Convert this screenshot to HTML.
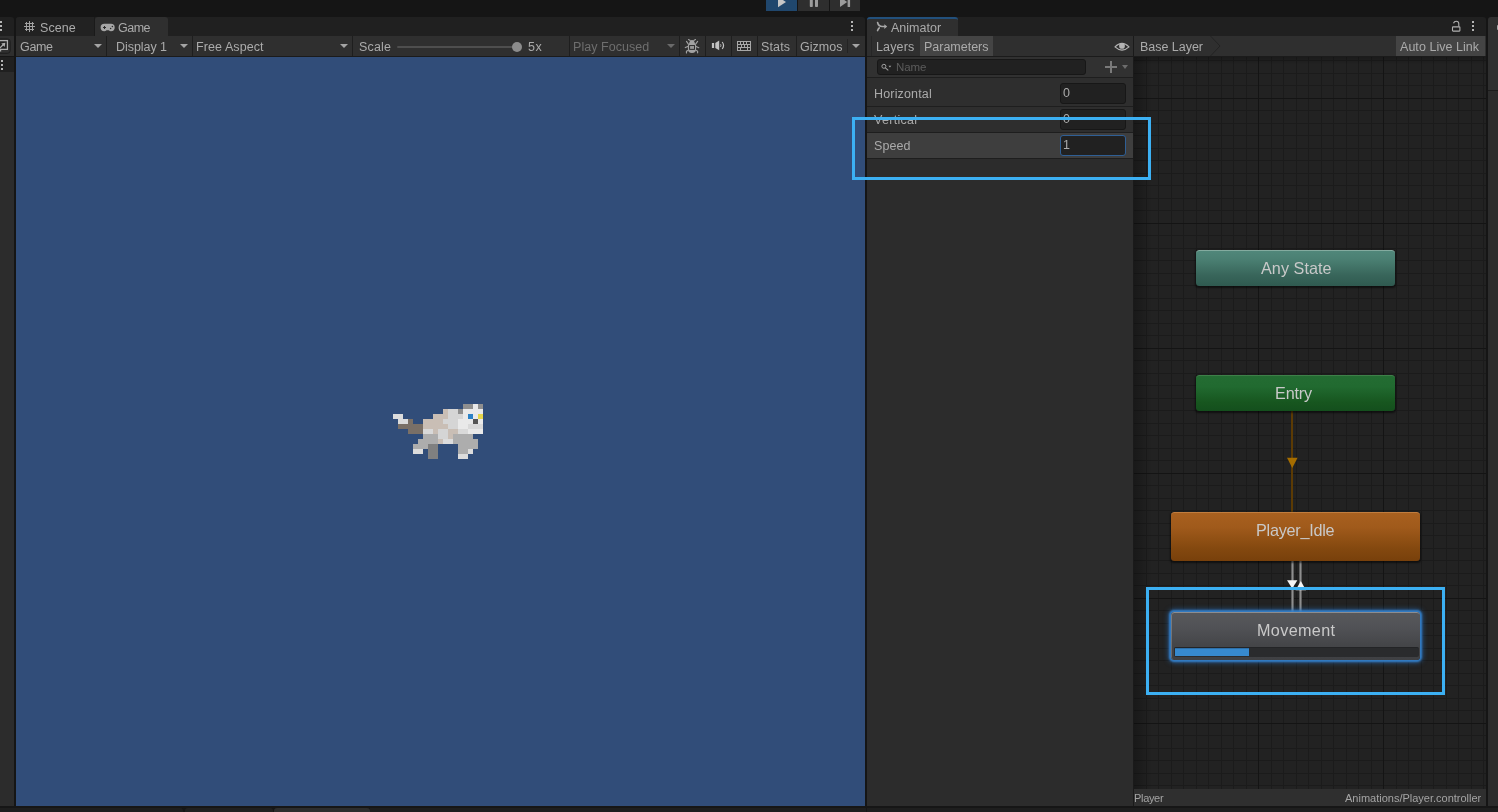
<!DOCTYPE html>
<html><head><meta charset="utf-8"><title>Unity</title>
<style>
*{box-sizing:border-box;margin:0;padding:0}
html,body{width:1498px;height:812px;overflow:hidden;background:#151515;font-family:"Liberation Sans",sans-serif}
#root{position:relative;width:1498px;height:812px;overflow:hidden;background:#151515}
.a{position:absolute}
.t{position:absolute;white-space:nowrap;line-height:16px;height:16px;will-change:transform}
.sep{position:absolute;top:36px;width:1px;height:20px;background:#1e1e1e}
.dd{position:absolute;width:0;height:0;border-left:4px solid transparent;border-right:4px solid transparent;border-top:4.5px solid #a4a4a4}
.dot{position:absolute;width:2px;height:2px;background:#b4b4b4}
.node{position:absolute;border-radius:3.5px;box-shadow:0 1px 2px 0.5px rgba(0,0,0,.55)}
svg{position:absolute;overflow:visible}
</style></head><body><div id="root">
<!-- ===== main toolbar play buttons ===== -->
<div class="a" style="left:766px;top:0;width:31px;height:11px;background:#20476d"></div>
<div class="a" style="left:798px;top:0;width:31px;height:11px;background:#2e2e2e"></div>
<div class="a" style="left:830px;top:0;width:30px;height:11px;background:#2e2e2e"></div>
<svg style="left:766px;top:0;overflow:hidden" width="94" height="11"><path d="M12 -3.2 L20 2 L12 7.2 Z" fill="#c6c6c6"/><rect x="43.8" y="-3" width="3" height="10" rx="0.8" fill="#9c9c9c"/><rect x="49" y="-3" width="3" height="10" rx="0.8" fill="#9c9c9c"/><path d="M74 -3 L81.2 2 L74 7 Z" fill="#9c9c9c"/><rect x="81.6" y="-3" width="2.5" height="10" rx="0.6" fill="#9c9c9c"/></svg>

<!-- ===== left strip ===== -->
<div class="a" style="left:0;top:17px;width:14px;height:19px;background:#202020;border-top-right-radius:3px"></div>
<div class="a" style="left:0;top:36px;width:14px;height:20px;background:#2f2f2f"></div>
<div class="a" style="left:0;top:57px;width:14px;height:15px;background:#202020"></div>
<div class="a" style="left:0;top:72px;width:14px;height:734px;background:#2c2c2c"></div>
<div class="a" style="left:0;top:21px;width:2px;height:2px;background:#b4b4b4"></div>
<div class="a" style="left:0;top:25px;width:2px;height:2px;background:#b4b4b4"></div>
<div class="a" style="left:0;top:29px;width:2px;height:2px;background:#b4b4b4"></div>
<div class="dot" style="left:1px;top:60px"></div><div class="dot" style="left:1px;top:64px"></div><div class="dot" style="left:1px;top:68px"></div>
<svg style="left:0;top:38px" width="12" height="16"><rect x="-3" y="0.9" width="13.2" height="14.4" rx="2.6" fill="none" stroke="#1d1d1d" stroke-width="1"/><rect x="-1" y="3.2" width="7.8" height="7.6" fill="#202020"/><path d="M0 2.6 H7.4 V11.4 H0.6 V13.6" fill="none" stroke="#adadad" stroke-width="1.2"/><path d="M-0.4 10.2 L3.9 6" fill="none" stroke="#adadad" stroke-width="1.2"/><path d="M5.3 4.8 L1.3 5.4 L4.7 8.9 Z" fill="#adadad"/></svg>

<!-- ===== game panel ===== -->
<div class="a" style="left:16px;top:17px;width:849px;height:19px;background:#202020;border-radius:3px 3px 0 0"></div>
<div class="a" style="left:16px;top:17px;width:79px;height:19px;background:#222222;border-radius:3px 0 0 0;border-right:1px solid #1a1a1a"></div>
<div class="a" style="left:95px;top:17px;width:73px;height:20px;background:#2f2f2f;border-radius:3px 3px 0 0"></div>
<div class="a" style="left:16px;top:36px;width:849px;height:20px;background:#2f2f2f"></div>
<div class="a" style="left:16px;top:56px;width:849px;height:1px;background:#1b1b1b"></div>
<div class="a" style="left:16px;top:57px;width:849px;height:749px;background:#314d79"></div>
<!-- scene icon -->
<svg style="left:24px;top:21px" width="11" height="11" shape-rendering="crispEdges"><g fill="#a2a2a2"><rect x="5" y="0" width="1" height="11"/><rect x="2" y="1" width="1" height="9"/><rect x="8" y="1" width="1" height="9"/><rect x="0" y="5" width="11" height="1"/><rect x="1" y="2" width="9" height="1"/><rect x="1" y="8" width="9" height="1"/></g></svg>
<!-- gamepad icon -->
<svg style="left:100px;top:23px" width="16" height="9"><path d="M4.3 0.8 H11 A3.7 3.7 0 0 1 11 8.2 Q9.6 8.2 8.8 7.2 H6.5 Q5.7 8.2 4.3 8.2 A3.7 3.7 0 0 1 4.3 0.8 Z" fill="#a6a6a6"/><path d="M4.5 3 V6 M3 4.5 H6" stroke="#2a2a2a" stroke-width="1"/><circle cx="12.4" cy="3.4" r="0.75" fill="#2a2a2a"/><circle cx="10.6" cy="5.5" r="0.75" fill="#2a2a2a"/></svg>
<!-- toolbar separators & arrows -->
<div class="sep" style="left:106px"></div><div class="sep" style="left:192px"></div><div class="sep" style="left:352px"></div>
<div class="sep" style="left:569px"></div><div class="sep" style="left:679px"></div><div class="sep" style="left:705px"></div><div class="sep" style="left:731px"></div><div class="sep" style="left:757px"></div><div class="sep" style="left:796px"></div>
<div class="a" style="left:847px;top:39px;width:1px;height:14px;background:#232323"></div>
<div class="dd" style="left:94px;top:44.2px"></div>
<div class="dd" style="left:180px;top:44.2px"></div>
<div class="dd" style="left:340px;top:44.2px"></div>
<div class="dd" style="left:667px;top:44.2px;border-top-color:#6a6a6a"></div>
<div class="dd" style="left:852px;top:44.2px"></div>
<!-- scale slider -->
<div class="a" style="left:397px;top:46px;width:120px;height:1.6px;background:#4e4e4e;border-radius:1px"></div>
<div class="a" style="left:512px;top:42px;width:10px;height:10px;border-radius:5px;background:#8c8c8c"></div>
<!-- kebab -->
<div class="dot" style="left:851px;top:21px"></div><div class="dot" style="left:851px;top:25px"></div><div class="dot" style="left:851px;top:29px"></div>
<!-- bug icon -->
<svg style="left:684px;top:38px" width="16" height="16"><g stroke="#a2a2a2" stroke-width="1.15" fill="none" stroke-linecap="round" stroke-linejoin="round"><path d="M6.2 2.5 L4.5 1.6 M9.8 2.5 L11.5 1.6"/><path d="M4.2 5.9 L2.5 3.4 M11.8 5.9 L13.6 3.4"/><path d="M3.9 8.4 L1.3 9.6 M12.1 8.4 L14.8 9.7"/><path d="M3.8 12.4 L2.45 13.3 V14.9 M12.3 12.4 L13.6 13.3 V14.8"/></g><path d="M5.1 5.4 Q5.6 1.9 8 1.9 Q10.4 1.9 10.9 5.4 Q12.1 5.8 12.1 7.5 V11 Q12.1 15 8 15 Q3.9 15 3.9 11 V7.5 Q3.9 5.8 5.1 5.4 Z" fill="#a2a2a2"/><rect x="5.6" y="7.55" width="4.9" height="3.8" fill="#969696" stroke="#2a2a2a" stroke-width="0.95"/></svg>
<!-- speaker -->
<svg style="left:711px;top:40px" width="14" height="11"><rect x="0.9" y="3" width="2.2" height="5" fill="#c2c2c2"/><path d="M4.3 3 L8.2 0.6 V10.3 L4.3 8 Z" fill="#c2c2c2"/><path d="M9.6 4.3 Q10.2 5.5 9.6 6.8" stroke="#c2c2c2" stroke-width="1" fill="none"/><path d="M11.2 2 Q13.9 5.5 11.2 9" stroke="#c2c2c2" stroke-width="1.2" fill="none"/></svg>
<!-- keyboard -->
<svg style="left:737px;top:41px" width="15" height="10" shape-rendering="crispEdges"><rect x="0" y="0" width="14" height="10" fill="#a8a8a8"/><g fill="#2c2c2c"><rect x="1" y="1" width="2" height="2"/><rect x="4" y="1" width="2" height="2"/><rect x="7" y="1" width="2" height="2"/><rect x="10" y="1" width="3" height="2"/><rect x="1" y="4" width="3" height="2"/><rect x="5" y="4" width="2" height="2"/><rect x="8" y="4" width="2" height="2"/><rect x="11" y="4" width="2" height="2"/><rect x="1" y="7" width="2" height="2"/><rect x="4" y="7" width="6" height="2"/><rect x="11" y="7" width="2" height="2"/></g></svg>

<!-- ===== animator panel ===== -->
<div class="a" style="left:867px;top:17px;width:619px;height:19px;background:#202020;border-radius:3px 3px 0 0"></div>
<div class="a" style="left:867px;top:17px;width:91px;height:20px;background:#2f2f2f;border-top:2px solid #22507c;border-radius:3px 3px 0 0"></div>
<div class="a" style="left:867px;top:36px;width:619px;height:20px;background:#2f2f2f"></div>
<div class="a" style="left:867px;top:56px;width:619px;height:1px;background:#1b1b1b"></div>
<div class="a" style="left:867px;top:57px;width:266px;height:749px;background:#2c2c2c"></div>
<div class="a" style="left:871px;top:36px;width:1px;height:20px;background:#262626"></div>
<div class="a" style="left:920px;top:36px;width:73px;height:20px;background:#444444"></div>
<div class="a" style="left:1133px;top:36px;width:1px;height:770px;background:#1a1a1a"></div>
<div class="a" style="left:1396px;top:36px;width:89px;height:20px;background:#444444"></div>
<!-- animator tab icon -->
<svg style="left:876px;top:21px" width="12" height="11"><g fill="none" stroke="#a9a9a9" stroke-width="1.6" stroke-linecap="round"><path d="M1.6 1.5 Q2.4 5.5 6.4 5.5 H8.6"/><path d="M3.3 6.9 Q2.2 7.8 1.6 9.6"/></g><path d="M8.3 3.3 L11.2 5.5 L8.3 7.9 Z" fill="#a9a9a9"/></svg>
<!-- eye -->
<svg style="left:1114px;top:42px" width="16" height="10"><path d="M1 4.9 Q8 -2.2 15 4.9 Q8 11.4 1 4.9 Z" fill="none" stroke="#b4b4b4" stroke-width="1.1"/><circle cx="8" cy="3.9" r="2.9" fill="#b4b4b4"/></svg>
<!-- breadcrumb chevron -->
<svg style="left:1208px;top:36px" width="14" height="20"><path d="M2.5 0 L12 10 L2.5 20" fill="none" stroke="#232323" stroke-width="1"/></svg>
<!-- lock -->
<svg style="left:1451px;top:19.6px" width="11" height="12"><rect x="1.5" y="6.9" width="7.4" height="4.2" rx="0.6" fill="none" stroke="#b0b0b0" stroke-width="1.1"/><path d="M2.5 3.2 Q3.2 1.2 5.2 1.2 Q7.8 1.2 7.8 3.8 V6.6" fill="none" stroke="#b0b0b0" stroke-width="1.1"/></svg>
<div class="dot" style="left:1472px;top:21px"></div><div class="dot" style="left:1472px;top:25px"></div><div class="dot" style="left:1472px;top:29px"></div>

<!-- parameters panel -->
<div class="a" style="left:867px;top:57px;width:266px;height:20px;background:#313131"></div>
<div class="a" style="left:867px;top:77px;width:266px;height:1px;background:#1e1e1e"></div>
<div class="a" style="left:877px;top:59px;width:209px;height:16px;background:#212121;border:1px solid #171717;border-radius:3px"></div>
<svg style="left:880px;top:62px" width="14" height="10"><circle cx="3.9" cy="4.3" r="2" fill="none" stroke="#a0a0a0" stroke-width="1"/><path d="M5.4 5.8 L8.3 8.4" stroke="#a0a0a0" stroke-width="1.1"/><path d="M8.5 3.7 H11.3 L9.9 5.4 Z" fill="#a0a0a0"/></svg>
<div class="a" style="left:1110px;top:61px;width:2px;height:12px;background:#7a7a7a"></div>
<div class="a" style="left:1105px;top:66px;width:12px;height:2px;background:#7a7a7a"></div>
<div class="dd" style="left:1121.5px;top:65px;border-top-color:#6c6c6c;border-left-width:3.6px;border-right-width:3.6px;border-top-width:4.2px"></div>
<!-- rows -->
<div class="a" style="left:867px;top:78px;width:266px;height:54px;background:#2e2e2e"></div>
<div class="a" style="left:867px;top:106px;width:266px;height:1px;background:#1e1e1e"></div>
<div class="a" style="left:867px;top:132px;width:266px;height:1px;background:#1e1e1e"></div>
<div class="a" style="left:867px;top:133px;width:266px;height:25px;background:#3e3e3e"></div>
<div class="a" style="left:867px;top:158px;width:266px;height:1px;background:#1e1e1e"></div>
<div class="a" style="left:1060px;top:83px;width:66px;height:21px;background:#212121;border:1px solid #171717;border-radius:3px"></div>
<div class="a" style="left:1060px;top:109px;width:66px;height:21px;background:#212121;border:1px solid #171717;border-radius:3px"></div>
<div class="a" style="left:1060px;top:135px;width:66px;height:21px;background:#212121;border:1px solid #2f5f95;border-radius:3px"></div>

<!-- graph -->
<div class="a" id="grid" style="left:1134px;top:57px;width:352px;height:732px;background:#222222;overflow:hidden">
<svg style="left:0;top:0" width="352" height="732" shape-rendering="crispEdges"><path d="M12 0h1v732h-1zM24 0h1v732h-1zM37 0h1v732h-1zM49 0h1v732h-1zM62 0h1v732h-1zM74 0h1v732h-1zM87 0h1v732h-1zM99 0h1v732h-1zM112 0h1v732h-1zM137 0h1v732h-1zM149 0h1v732h-1zM162 0h1v732h-1zM174 0h1v732h-1zM187 0h1v732h-1zM199 0h1v732h-1zM212 0h1v732h-1zM224 0h1v732h-1zM237 0h1v732h-1zM262 0h1v732h-1zM274 0h1v732h-1zM287 0h1v732h-1zM299 0h1v732h-1zM312 0h1v732h-1zM324 0h1v732h-1zM337 0h1v732h-1zM349 0h1v732h-1zM0 3h352v1h-352zM0 16h352v1h-352zM0 28h352v1h-352zM0 53h352v1h-352zM0 66h352v1h-352zM0 78h352v1h-352zM0 91h352v1h-352zM0 103h352v1h-352zM0 116h352v1h-352zM0 128h352v1h-352zM0 141h352v1h-352zM0 153h352v1h-352zM0 178h352v1h-352zM0 191h352v1h-352zM0 203h352v1h-352zM0 216h352v1h-352zM0 228h352v1h-352zM0 241h352v1h-352zM0 253h352v1h-352zM0 266h352v1h-352zM0 278h352v1h-352zM0 303h352v1h-352zM0 316h352v1h-352zM0 328h352v1h-352zM0 341h352v1h-352zM0 353h352v1h-352zM0 366h352v1h-352zM0 378h352v1h-352zM0 391h352v1h-352zM0 403h352v1h-352zM0 428h352v1h-352zM0 441h352v1h-352zM0 453h352v1h-352zM0 466h352v1h-352zM0 478h352v1h-352zM0 491h352v1h-352zM0 503h352v1h-352zM0 516h352v1h-352zM0 528h352v1h-352zM0 553h352v1h-352zM0 566h352v1h-352zM0 578h352v1h-352zM0 591h352v1h-352zM0 603h352v1h-352zM0 616h352v1h-352zM0 628h352v1h-352zM0 641h352v1h-352zM0 653h352v1h-352zM0 678h352v1h-352zM0 691h352v1h-352zM0 703h352v1h-352zM0 716h352v1h-352zM0 728h352v1h-352z" fill="#1b1b1b"/><path d="M124 0h1v732h-1zM249 0h1v732h-1zM0 41h352v1h-352zM0 166h352v1h-352zM0 291h352v1h-352zM0 416h352v1h-352zM0 541h352v1h-352zM0 666h352v1h-352z" fill="#141414"/></svg>
<div class="a" style="left:0;top:0;width:18px;height:732px;background:linear-gradient(90deg,rgba(0,0,0,.28),rgba(0,0,0,0))"></div>
<div class="a" style="left:0;top:0;width:352px;height:8px;background:linear-gradient(180deg,rgba(0,0,0,.22),rgba(0,0,0,0))"></div>
</div>
<div class="a" style="left:1134px;top:789px;width:352px;height:17px;background:#2f2f2f"></div>

<!-- transitions -->
<div class="a" style="left:1291px;top:411px;width:2.4px;height:101px;background:#5c3b04"></div>
<svg style="left:1286px;top:457px" width="13" height="12"><path d="M1 0.8 H11.6 L6.3 11 Z" fill="#a56d00"/></svg>
<div class="a" style="left:1290.6px;top:561px;width:3.2px;height:51px;background:linear-gradient(90deg,#484848,#8e8e8e 50%,#484848)"></div>
<div class="a" style="left:1299.3px;top:561px;width:3.2px;height:51px;background:linear-gradient(90deg,#484848,#8e8e8e 50%,#484848)"></div>
<svg style="left:1286px;top:579px" width="22" height="13"><path d="M1 1.2 H11.4 L6.2 9.6 Z" fill="#f4f4f4"/><path d="M9.6 11.2 L14.8 2 L20 11.2 Z" fill="#f4f4f4"/></svg>

<!-- nodes -->
<div class="node" style="left:1196px;top:250px;width:199px;height:36px;background:linear-gradient(180deg,#50877a 0%,#4a7f72 25%,#38655a 70%,#2f5a50 100%);border-top:1px solid #83ab9f"></div>
<div class="node" style="left:1196px;top:375px;width:199px;height:36px;background:linear-gradient(180deg,#236c32 0%,#216a30 30%,#17561f 75%,#144f1d 100%);border-top:1px solid #3e8049"></div>
<div class="node" style="left:1171px;top:512px;width:249px;height:49px;background:linear-gradient(180deg,#a8601f 0%,#a05a1b 30%,#83480f 75%,#78400b 100%);border-top:1px solid #c17d3e"></div>
<div class="node" style="left:1171px;top:612px;width:249px;height:48px;background:linear-gradient(180deg,#57585b 0%,#515256 30%,#444548 70%,#3f4043 100%);border-top:1px solid #8c8d90;border-left:1px solid rgba(255,255,255,.22);box-shadow:0 0 2px 1.2px rgba(52,130,205,.92),0 0 5px 3px rgba(42,112,188,.55)"></div>
<div class="a" style="left:1174px;top:647px;width:245px;height:10px;background:#2a2b2d;border-radius:2px;border-top:1px solid #232426"></div>
<div class="a" style="left:1175px;top:648px;width:74px;height:8px;background:#3789cd;border-top:1px solid #2d70aa"></div>

<!-- right sliver panel -->
<div class="a" style="left:1488px;top:17px;width:10px;height:789px;background:#2f2f2f;border-top-left-radius:3px"></div>
<div class="a" style="left:1488px;top:90px;width:10px;height:1px;background:#1c1c1c"></div>
<div class="a" style="left:1488px;top:91px;width:10px;height:715px;background:#2c2c2c"></div>
<div class="a" style="left:1497px;top:24.5px;width:1px;height:5px;background:#a8a8a8;border-radius:1px 0 0 1px"></div>

<!-- bottom strip tabs -->
<div class="a" style="left:0;top:806px;width:1498px;height:6px;background:#161616"></div>
<div class="a" style="left:0;top:808px;width:183px;height:4px;background:#1e1e1e;border-top-right-radius:3px"></div>
<div class="a" style="left:185px;top:808px;width:88px;height:4px;background:#202020;border-radius:3px 3px 0 0"></div>
<div class="a" style="left:274px;top:808px;width:96px;height:4px;background:#2d2d2d;border-radius:3px 3px 0 0"></div>
<div class="a" style="left:370px;top:808px;width:496px;height:4px;background:#1e1e1e"></div>
<div class="a" style="left:867px;top:808px;width:631px;height:4px;background:#1e1e1e"></div>

<!-- cat -->
<svg style="left:393px;top:404px" width="90" height="55" shape-rendering="crispEdges"><rect x="70" y="0" width="10" height="5" fill="#8f8f8f"/><rect x="80" y="0" width="5" height="5" fill="#e9e9e9"/><rect x="85" y="0" width="5" height="5" fill="#8f8f8f"/><rect x="50" y="5" width="5" height="5" fill="#c9beb5"/><rect x="55" y="5" width="10" height="5" fill="#d5d5d5"/><rect x="65" y="5" width="5" height="5" fill="#8f8f8f"/><rect x="70" y="5" width="20" height="5" fill="#e9e9e9"/><rect x="0" y="10" width="10" height="5" fill="#dcdcdc"/><rect x="40" y="10" width="15" height="5" fill="#c9beb5"/><rect x="55" y="10" width="15" height="5" fill="#d5d5d5"/><rect x="70" y="10" width="5" height="5" fill="#e9e9e9"/><rect x="75" y="10" width="5" height="5" fill="#2b80c5"/><rect x="80" y="10" width="5" height="5" fill="#e9e9e9"/><rect x="85" y="10" width="5" height="5" fill="#e6d64c"/><rect x="5" y="15" width="10" height="5" fill="#dcdcdc"/><rect x="15" y="15" width="5" height="5" fill="#7a7067"/><rect x="30" y="15" width="20" height="5" fill="#c9beb5"/><rect x="50" y="15" width="15" height="5" fill="#d5d5d5"/><rect x="65" y="15" width="15" height="5" fill="#e9e9e9"/><rect x="80" y="15" width="5" height="5" fill="#555555"/><rect x="85" y="15" width="5" height="5" fill="#e9e9e9"/><rect x="5" y="20" width="25" height="5" fill="#7a7067"/><rect x="30" y="20" width="25" height="5" fill="#c9beb5"/><rect x="55" y="20" width="10" height="5" fill="#d5d5d5"/><rect x="65" y="20" width="10" height="5" fill="#e9e9e9"/><rect x="75" y="20" width="15" height="5" fill="#d9d9d9"/><rect x="15" y="25" width="15" height="5" fill="#7a7067"/><rect x="30" y="25" width="10" height="5" fill="#d9d9d9"/><rect x="40" y="25" width="5" height="5" fill="#c9beb5"/><rect x="45" y="25" width="10" height="5" fill="#d5d5d5"/><rect x="55" y="25" width="10" height="5" fill="#c9beb5"/><rect x="65" y="25" width="10" height="5" fill="#d9d9d9"/><rect x="75" y="25" width="15" height="5" fill="#e9e9e9"/><rect x="30" y="30" width="15" height="5" fill="#adadad"/><rect x="45" y="30" width="10" height="5" fill="#d5d5d5"/><rect x="55" y="30" width="5" height="5" fill="#c9beb5"/><rect x="60" y="30" width="20" height="5" fill="#adadad"/><rect x="25" y="35" width="20" height="5" fill="#adadad"/><rect x="45" y="35" width="5" height="5" fill="#c9beb5"/><rect x="50" y="35" width="10" height="5" fill="#dcdcdc"/><rect x="60" y="35" width="25" height="5" fill="#adadad"/><rect x="20" y="40" width="15" height="5" fill="#adadad"/><rect x="35" y="40" width="10" height="5" fill="#808080"/><rect x="65" y="40" width="20" height="5" fill="#adadad"/><rect x="20" y="45" width="10" height="5" fill="#dcdcdc"/><rect x="35" y="45" width="10" height="5" fill="#808080"/><rect x="65" y="45" width="10" height="5" fill="#adadad"/><rect x="75" y="45" width="5" height="5" fill="#dcdcdc"/><rect x="35" y="50" width="10" height="5" fill="#808080"/><rect x="65" y="50" width="10" height="5" fill="#dcdcdc"/></svg>
<!-- text -->
<div class="t" style="left:40.06px;top:19.67px;font-size:12.5px;letter-spacing:0.055px;color:#ababab">Scene</div>
<div class="t" style="left:118.26px;top:19.67px;font-size:12.5px;letter-spacing:-0.491px;color:#ababab">Game</div>
<div class="t" style="left:19.86px;top:38.67px;font-size:12.5px;letter-spacing:-0.324px;color:#ababab">Game</div>
<div class="t" style="left:115.76px;top:38.67px;font-size:12.5px;letter-spacing:-0.056px;color:#ababab">Display 1</div>
<div class="t" style="left:195.76px;top:38.67px;font-size:12.5px;letter-spacing:0.087px;color:#ababab">Free Aspect</div>
<div class="t" style="left:358.96px;top:38.67px;font-size:12.5px;letter-spacing:0.148px;color:#ababab">Scale</div>
<div class="t" style="left:527.66px;top:38.67px;font-size:12.5px;letter-spacing:0.672px;color:#ababab">5x</div>
<div class="t" style="left:573.06px;top:38.67px;font-size:12.5px;letter-spacing:0.049px;color:#6e6e6e">Play Focused</div>
<div class="t" style="left:760.96px;top:38.67px;font-size:12.5px;letter-spacing:0.144px;color:#ababab">Stats</div>
<div class="t" style="left:799.86px;top:38.67px;font-size:12.5px;letter-spacing:0.020px;color:#ababab">Gizmos</div>
<div class="t" style="left:891.06px;top:19.67px;font-size:12.5px;letter-spacing:0.006px;color:#ababab">Animator</div>
<div class="t" style="left:875.66px;top:38.67px;font-size:12.5px;letter-spacing:0.149px;color:#ababab">Layers</div>
<div class="t" style="left:923.86px;top:38.67px;font-size:12.5px;letter-spacing:-0.015px;color:#ababab">Parameters</div>
<div class="t" style="left:1140.16px;top:38.67px;font-size:12.5px;letter-spacing:-0.029px;color:#ababab">Base Layer</div>
<div class="t" style="left:1400.06px;top:38.67px;font-size:12.5px;letter-spacing:0.042px;color:#ababab">Auto Live Link</div>
<div class="t" style="left:895.84px;top:59.02px;font-size:11.5px;letter-spacing:-0.087px;color:#5c5c5c">Name</div>
<div class="t" style="left:873.86px;top:85.87px;font-size:12.5px;letter-spacing:0.166px;color:#ababab">Horizontal</div>
<div class="t" style="left:873.86px;top:111.87px;font-size:12.5px;letter-spacing:0.296px;color:#ababab">Vertical</div>
<div class="t" style="left:873.86px;top:137.87px;font-size:12.5px;letter-spacing:0.080px;color:#ababab">Speed</div>
<div class="t" style="left:1063.06px;top:84.87px;font-size:12.5px;letter-spacing:0.000px;color:#ababab">0</div>
<div class="t" style="left:1063.06px;top:110.87px;font-size:12.5px;letter-spacing:0.000px;color:#ababab">0</div>
<div class="t" style="left:1063.06px;top:136.87px;font-size:12.5px;letter-spacing:0.000px;color:#ababab">1</div>
<div class="t" style="left:1260.59px;top:260.09px;font-size:16.2px;letter-spacing:0.041px;color:#c9c9c9">Any State</div>
<div class="t" style="left:1275.49px;top:385.09px;font-size:16.2px;letter-spacing:-0.167px;color:#c9c9c9">Entry</div>
<div class="t" style="left:1256.49px;top:521.89px;font-size:16.2px;letter-spacing:-0.237px;color:#c9c9c9">Player_Idle</div>
<div class="t" style="left:1256.69px;top:621.79px;font-size:16.2px;letter-spacing:0.350px;color:#c9c9c9">Movement</div>
<div class="t" style="left:1134.17px;top:790.19px;font-size:11.0px;letter-spacing:-0.327px;color:#a4a4a4">Player</div>
<div class="t" style="left:1345.48px;top:790.19px;font-size:11.0px;letter-spacing:-0.003px;color:#a4a4a4">Animations/Player.controller</div>
<!-- annotation boxes -->
<div class="a" style="left:852px;top:117px;width:299px;height:63px;border:3px solid #3cb0f3"></div>
<div class="a" style="left:1146px;top:587px;width:299px;height:108px;border:3px solid #3cb0f3"></div>

</div></body></html>
